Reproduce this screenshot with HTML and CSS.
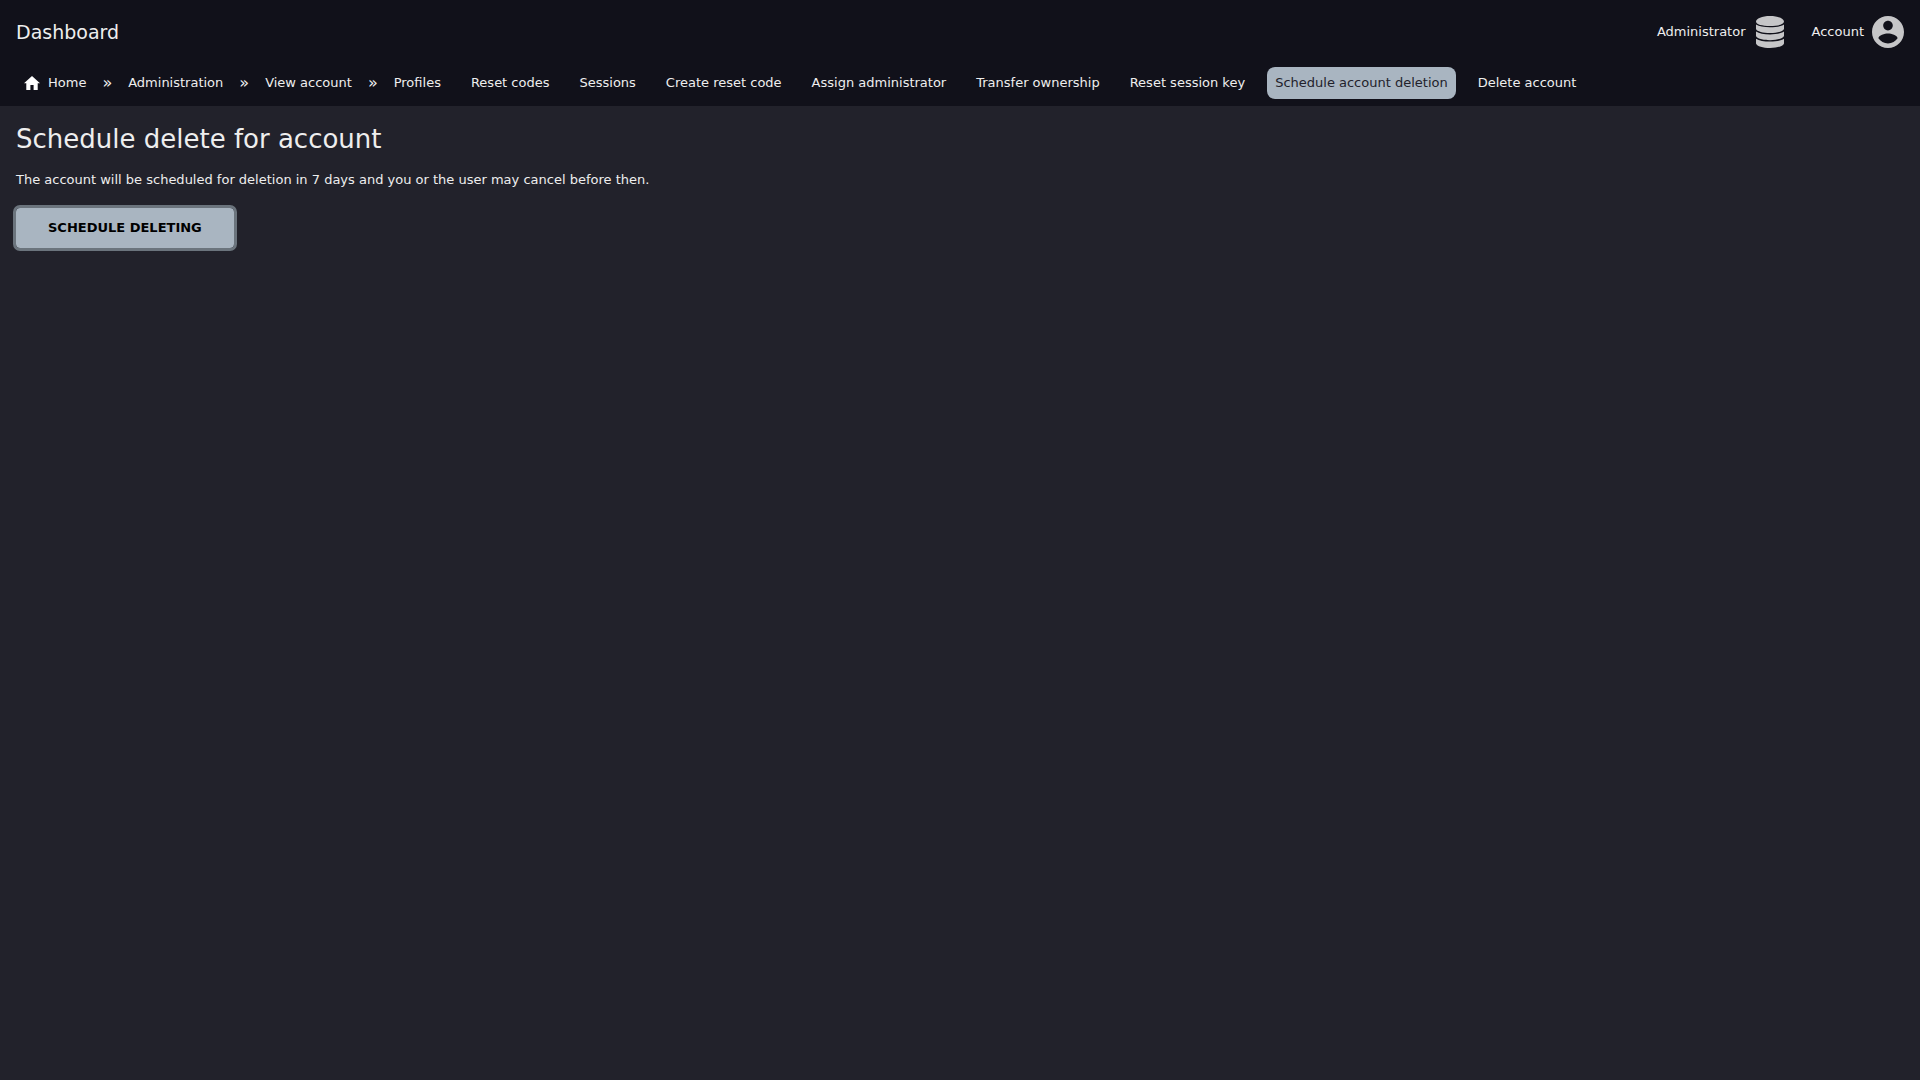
FILE: index.html
```html
<!DOCTYPE html>
<html lang="en">
<head>
<meta charset="utf-8">
<title>Schedule delete for account</title>
<link rel="stylesheet" href="styles.css">
</head>
<body>
<header class="header">
  <a class="brand" href="#">Dashboard</a>
  <div class="menus">
    <a class="menu" href="#">Administrator
      <svg class="menu-icon" viewBox="0 0 32 32" aria-hidden="true">
        <path d="M2 5.500C2 2.500 8 0 16 0s14 2.500 14 5.500S24 10 16 10 2 8.500 2 5.500z"/>
        <path d="M2 8.500C5 10.500 10 11.200 16 11.200S27 10.500 30 8.500V13c-1 2.500-7 4-14 4S3 15.500 2 13z"/>
        <path d="M2 15.500C5 17.500 10 18.400 16 18.400S27 17.500 30 15.500V20c-1 2.500-7 4.200-14 4.200S3 22.500 2 20z"/>
        <path d="M2 22.700C5 24.700 10 25.600 16 25.600S27 24.700 30 22.700V27.500C29 30.300 23 32 16 32S3 30.300 2 27.500z"/>
      </svg>
    </a>
    <a class="menu" href="#">Account
      <svg class="menu-icon" viewBox="2 2 20 20" aria-hidden="true">
        <path d="M12 2C6.480 2 2 6.480 2 12s4.480 10 10 10 10-4.480 10-10S17.520 2 12 2zm0 3c1.660 0 3 1.340 3 3s-1.340 3-3 3-3-1.340-3-3 1.340-3 3-3zm0 14.200c-2.500 0-4.710-1.280-6-3.220.030-1.990 4-3.080 6-3.080 1.990 0 5.970 1.090 6 3.080-1.290 1.940-3.500 3.220-6 3.220z"/>
      </svg>
    </a>
  </div>
</header>
<nav class="nav" aria-label="Breadcrumb">
  <div class="crumbs">
    <a class="link" href="#">
      <svg class="home-icon" viewBox="0 0 16 16" aria-hidden="true"><path d="M8 1 0 8.300h2.300V15h4.100v-5h3.200v5h4.100V8.300H16z"/></svg>
      Home</a>
    <span class="separator">»</span>
    <a class="link" href="#">Administration</a>
    <span class="separator">»</span>
    <a class="link" href="#">View account</a>
    <span class="separator">»</span>
  </div>
  <div class="links">
    <a class="link" href="#">Profiles</a>
    <a class="link" href="#">Reset codes</a>
    <a class="link" href="#">Sessions</a>
    <a class="link" href="#">Create reset code</a>
    <a class="link" href="#">Assign administrator</a>
    <a class="link" href="#">Transfer ownership</a>
    <a class="link" href="#">Reset session key</a>
    <a class="link current" href="#" aria-current="page">Schedule account deletion</a>
    <a class="link" href="#">Delete account</a>
  </div>
</nav>
<main class="content">
  <h1 class="title">Schedule delete for account</h1>
  <p class="text">The account will be scheduled for deletion in 7 days and you or the user may cancel before then.</p>
  <form>
    <button class="button" type="button">Schedule deleting</button>
  </form>
</main>
</body>
</html>
```
FILE: styles.css
```css
* {
  box-sizing: border-box;
}

body {
  margin: 0;
  background: #22222b;
  color: #eeeeee;
  font-family: "DejaVu Sans", sans-serif;
  font-size: 13px;
  line-height: 16px;
}

a {
  color: inherit;
  text-decoration: none;
}

.header {
  display: flex;
  align-items: center;
  justify-content: space-between;
  padding: 16px;
  background: #11111a;
}

.brand {
  font-size: 19px;
  line-height: 32px;
}

.menus {
  display: flex;
  gap: 26px;
}

.menu {
  display: flex;
  align-items: center;
  gap: 8px;
}

.menu-icon {
  width: 32px;
  height: 32px;
  fill: #c6c6c8;
}

.nav {
  display: flex;
  flex-wrap: wrap;
  padding: 3px 16px 7px;
  background: #11111a;
}

.crumbs {
  display: flex;
  align-items: center;
}

.links {
  display: flex;
  flex-wrap: wrap;
  gap: 0 14px;
}

.link {
  display: flex;
  align-items: center;
  gap: 8px;
  padding: 8px;
  border-radius: 8px;
}

.home-icon {
  width: 16px;
  height: 16px;
  fill: #fff;
}

.separator {
  padding: 0 8px;
  font-size: 16px;
}

.current {
  background: #a9b5c1;
  color: #22222b;
}

.content {
  padding: 16px;
}

.title {
  margin: 0 0 16px;
  font-size: 26px;
  font-weight: 400;
  line-height: 34px;
}

.text {
  margin: 0 0 20px;
}

.button {
  display: block;
  padding: 12px 32px;
  border: 0;
  border-radius: 4px;
  outline: 3px solid #6b747d;
  background: #a9b5c1;
  color: #000;
  font: inherit;
  font-weight: 700;
  text-transform: uppercase;
}
```
